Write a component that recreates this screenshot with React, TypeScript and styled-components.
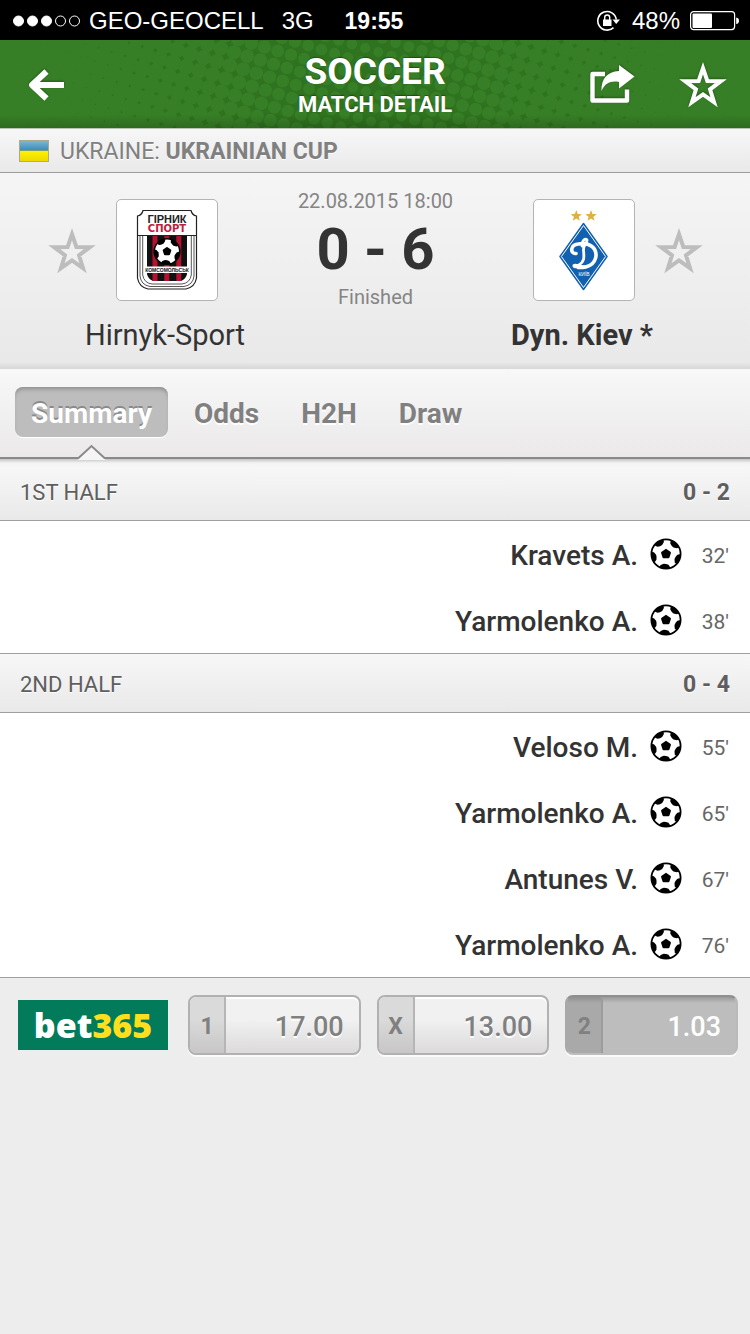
import React from "react";
import styled, { createGlobalStyle } from "styled-components";

const GlobalStyle = createGlobalStyle`
  * { box-sizing: border-box; }
  body {
    margin: 0;
    background: #ededed;
    font-family: Roboto, "Noto Sans", sans-serif;
    color: #333;
  }
  button { font: inherit; color: inherit; border: 0; padding: 0; background: none; cursor: pointer; }
  h1, h2, p, ul { margin: 0; padding: 0; font: inherit; }
  svg { display: block; flex: none; }
`;

const StatusBar = styled.div`
  display: grid;
  grid-template-columns: 1fr auto 1fr;
  align-items: center;
  height: 40px;
  padding: 2px 11px 0 13px;
  background: #000;
  color: #fff;
  font-family: "Liberation Sans", Arial, sans-serif;
  font-size: 24px;
`;

const StatusGroup = styled.div<{ $end?: boolean }>`
  display: flex;
  align-items: center;
  gap: ${(p) => (p.$end ? 10 : 8)}px;
  white-space: nowrap;
  justify-content: ${(p) => (p.$end ? "flex-end" : "flex-start")};
`;

const Network = styled.span`
  margin-left: 10px;
`;

const Clock = styled.time`
  margin-right: 4px;
  font-size: 23px;
  font-weight: 700;
`;

const Header = styled.header`
  position: relative;
  display: grid;
  grid-template-columns: 1fr auto 1fr;
  align-items: center;
  height: 88px;
  padding: 0 23px;
  background: #377f26;
  color: #fff;
  overflow: hidden;
`;

const Halftone = styled.svg`
  position: absolute;
  top: 0;
  left: 50%;
  transform: translateX(-50%);
`;

const HeaderShade = styled.div`
  position: absolute;
  inset: 0;
  background: linear-gradient(transparent 84%, rgba(0, 0, 0, 0.16));
`;

const Titles = styled.div`
  position: relative;
  padding-top: 4px;
  text-align: center;
  font-weight: 700;
  text-shadow: 0 -1px 1px rgba(0, 0, 0, 0.35);
`;

const Title = styled.h1`
  font-size: 37px;
  line-height: 38px;
  font-weight: 700;
`;

const Subtitle = styled.p`
  font-size: 22px;
  line-height: 28px;
`;

const HeaderActions = styled.div<{ $end?: boolean }>`
  position: relative;
  display: flex;
  align-items: center;
  gap: 44px;
  justify-content: ${(p) => (p.$end ? "flex-end" : "flex-start")};
  filter: drop-shadow(0 -1px 1px rgba(0, 0, 0, 0.3));
`;

const League = styled.div`
  display: flex;
  align-items: center;
  gap: 11px;
  height: 45px;
  padding: 0 19px;
  border-top: 1px solid #b9c4b5;
  border-bottom: 1px solid #9c9c9c;
  background: linear-gradient(#f7f7f7, #e9e9e9);
  color: #808080;
  font-size: 23px;
  line-height: 26px;
  text-shadow: 0 1px 0 #fff;
`;

const LeagueName = styled.span`
  padding-top: 2px;
`;

const Flag = styled.span`
  width: 30px;
  height: 22px;
  border: 1px solid #a9ab8a;
  background: linear-gradient(#7db5d3, #3b8dbb 46%, #93a05a 48%, #93a05a 50%, #fff000 52%, #ecd800);
`;

const Match = styled.section`
  display: flex;
  height: 196px;
  padding: 26px 47px 0 48px;
  background: linear-gradient(#f5f5f5, #e9e9e9 97%, #d9d9d9);
  border-bottom: 1px solid #dadada;
`;

const Team = styled.div`
  flex: 0 0 238px;
  display: flex;
  flex-direction: column;
  align-items: center;
  gap: 14px;
`;

const CrestRow = styled.div<{ $away?: boolean }>`
  display: flex;
  flex-direction: ${(p) => (p.$away ? "row-reverse" : "row")};
  align-items: center;
  gap: 20px;
  ${(p) => (p.$away ? "padding-left" : "padding-right")}: 68px;
`;

const Crest = styled.div`
  width: 102px;
  height: 102px;
  border: 1px solid #b4b4b4;
  border-radius: 5px;
  background: #fff;
`;

const TeamName = styled.h2<{ $winner?: boolean }>`
  padding-right: 4px;
  font-size: 29px;
  line-height: 40px;
  font-weight: ${(p) => (p.$winner ? 700 : 400)};
  white-space: nowrap;
`;

const ScoreBox = styled.div`
  flex: 1;
  display: flex;
  flex-direction: column;
  align-items: center;
  margin-top: -10px;
  white-space: nowrap;
  color: #858585;
  font-size: 20px;
  line-height: 24px;
`;

const Score = styled.strong`
  color: #333;
  font-size: 58px;
  line-height: 72px;
  font-weight: 700;
`;

const Tabs = styled.nav`
  position: relative;
  display: flex;
  gap: 10px;
  height: 90px;
  padding: 18px 15px 0;
  border-bottom: 2px solid #8b8989;
  background: linear-gradient(#f8f8f8, #ebe9ea);
`;

const Tab = styled.button<{ $active?: boolean }>`
  height: 50px;
  padding: 2px 16px 0;
  border-radius: 8px;
  font-size: 28px;
  font-weight: 700;
  color: ${(p) => (p.$active ? "#fff" : "#808080")};
  background: ${(p) => (p.$active ? "#bdbdbd" : "none")};
  box-shadow: ${(p) => (p.$active ? "inset 0 4px 4px -2px #8c8c8c, 0 1px 0 #fff" : "none")};
  text-shadow: ${(p) => (p.$active ? "0 -2px 0 #8a8a8a" : "0 2px 0 #fff")};
`;

const Pointer = styled.svg`
  position: absolute;
  left: 77px;
  bottom: -3px;
`;

const PeriodHead = styled.div<{ $underTabs?: boolean }>`
  display: flex;
  justify-content: space-between;
  align-items: center;
  height: ${(p) => (p.$underTabs ? 62 : 60)}px;
  padding: ${(p) => (p.$underTabs ? "5px 20px 0" : "2px 20px 0")};
  border-top: ${(p) => (p.$underTabs ? "none" : "1px solid #9f9f9f")};
  border-bottom: 1px solid #9f9f9f;
  background: ${(p) =>
    p.$underTabs ? "linear-gradient(#c4c4c4, #f3f3f3 4px, #f7f7f7 8px, #e9e9e9)" : "linear-gradient(#f7f7f7, #e9e9e9)"};
  color: #5e5e5e;
  font-size: 22px;
  text-shadow: 0 1px 0 #fff;
`;

const PeriodScore = styled.b`
  font-size: 23px;
`;

const Events = styled.ul`
  list-style: none;
  background: #fff;
`;

const EventRow = styled.li`
  display: flex;
  justify-content: flex-end;
  align-items: center;
  gap: 12px;
  height: 66px;
  padding-right: 21px;
`;

const Player = styled.span`
  padding-top: 3px;
  font-size: 28px;
  line-height: 32px;
  font-weight: 500;
`;

const Minute = styled.span`
  width: 35px;
  padding-top: 4px;
  text-align: right;
  font-size: 21px;
  line-height: 24px;
  color: #666;
`;

const OddsBar = styled.section`
  display: flex;
  align-items: center;
  gap: 20px;
  padding: 17px 12px 17px 18px;
  border-top: 1px solid #9f9f9f;
`;

const BookmakerLink = styled.a`
  flex: none;
  width: 150px;
  height: 50px;
  background: #027b5b;
  color: #fff;
  font: 800 34px/50px "Open Sans", sans-serif;
  text-align: center;
  text-decoration: none;
`;

const Yellow = styled.span`
  color: #ffdf1b;
`;

const OddsList = styled.div`
  flex: 1;
  display: flex;
  gap: 16px;
`;

const Odd = styled.button<{ $picked?: boolean }>`
  flex: 1;
  display: flex;
  height: 60px;
  border: 2px solid #b1b1b1;
  border-radius: 8px;
  overflow: hidden;
  background: ${(p) =>
    p.$picked
      ? "linear-gradient(#999, #bdbdbd 6px)"
      : "linear-gradient(#f1f1f1 40%, #dcdadb)"};
  box-shadow: 0 2px 0 #fbfbfb${(p) => (p.$picked ? "" : ", inset 0 2px 0 #fff")};
  ${(p) => p.$picked && "border-color: #8f8f8f #bababa #bdbdbd #a9a9a9;"}
  color: ${(p) => (p.$picked ? "#fff" : "#808080")};
  text-shadow: ${(p) => (p.$picked ? "none" : "0 2px 0 #fff")};
`;

const OddKey = styled.span<{ $picked?: boolean }>`
  width: 36px;
  border-right: 2px solid ${(p) => (p.$picked ? "#9d9d9d" : "#b5b5b5")};
  background: ${(p) => (p.$picked ? "linear-gradient(#909090, #a9a9a9 6px)" : "linear-gradient(#dadada 40%, #c8c6c7)")};
  color: #808080;
  font-size: 23px;
  font-weight: 700;
  line-height: 60px;
  text-shadow: none;
`;

const OddValue = styled.span`
  flex: 1;
  padding-right: 15px;
  text-align: right;
  font-size: 27px;
  font-weight: 500;
  line-height: 60px;
`;

/* Rotated square lattice whose dots grow away from the middle until they merge. */
const dots: { x: number; y: number; r: number }[] = [];
for (let i = -40; i <= 40; i++) {
  for (let j = -20; j <= 20; j++) {
    const x = 234 + i * 13.2 - j * 4.1;
    const y = 12.3 + i * 3.9 + j * 13.1;
    if (x > 10 && x < 740 && y > -12 && y < 100) {
      dots.push({ x, y, r: 5 + Math.abs(x - 372) * 0.0155 });
    }
  }
}

const HalftonePattern = () => (
  <Halftone width="750" height="88" viewBox="0 0 750 88" aria-hidden="true">
    <rect x="60" width="636" height="88" fill="#2f721f" />
    {dots.map((d, i) => (
      <circle key={i} cx={d.x} cy={d.y} r={d.r} fill="#377f26" />
    ))}
  </Halftone>
);

const polar = (cx: number, cy: number, r: number, deg: number) => {
  const a = (deg * Math.PI) / 180;
  return `${(cx + r * Math.cos(a)).toFixed(2)},${(cy + r * Math.sin(a)).toFixed(2)}`;
};

const starPoints = (cx: number, cy: number, outer: number, inner: number) =>
  Array.from({ length: 10 }, (_, i) => polar(cx, cy, i % 2 ? inner : outer, -90 + i * 36)).join(" ");

const StarIcon = ({ color }: { color: string }) => (
  <svg width="48" height="48" viewBox="0 0 48 48" aria-hidden="true">
    <polygon points={starPoints(24, 27, 18.8, 7.4)} fill="none" stroke={color} strokeWidth="4" strokeMiterlimit="10" />
  </svg>
);

const BallShape = ({ x, y, r }: { x: number; y: number; r: number }) => (
  <g transform={`translate(${x} ${y}) scale(${r / 16})`}>
    <circle r="14.6" fill="#fff" stroke="#000" strokeWidth="1.8" />
    <polygon
      points={[0, 1, 2, 3, 4].map((k) => polar(0, 0, 3.9, -90 + k * 72)).join(" ")}
      stroke="#000"
      strokeWidth="2.4"
      strokeLinejoin="round"
    />
    {[95, 23, -49, -121, 167].map((a) => (
      <path
        key={a}
        transform={`rotate(${a})`}
        d="M10.6 -3.4 Q9.6 -1 9.8 1.4 L11.4 4.400 Q12.600 5.400 14 5 L15 0 L14 -5.400 Q12 -5.200 10.600 -3.400Z"
      />
    ))}
  </g>
);

const BallIcon = () => (
  <svg width="32" height="32" viewBox="0 0 32 32" role="img" aria-label="Goal">
    <BallShape x={16} y={16} r={16} />
  </svg>
);

const BackIcon = () => (
  <svg width="44" height="40" viewBox="0 0 44 40" aria-hidden="true">
    <path d="M9 21H41M23.500 7.500L9 21L23.500 34.500" fill="none" stroke="#fff" strokeWidth="6" strokeLinejoin="round" />
  </svg>
);

const ShareIcon = () => (
  <svg width="46" height="38" viewBox="0 0 46 38" aria-hidden="true">
    <path d="M16 9H3.5V35.5H38V24.5" fill="none" stroke="#fff" strokeWidth="4.4" strokeLinejoin="round" />
    <path d="M30 0L45.500 11.500L30 23.500V17C22 15.500 16 18 12.500 26C12 14 18 6.500 30 6Z" fill="#fff" />
  </svg>
);

const SignalDots = () => (
  <svg width="68" height="12" viewBox="0 0 68 12" role="img" aria-label="Signal">
    {[0, 1, 2, 3, 4].map((i) => (
      <circle key={i} cx={5.5 + i * 14} cy="6" r="5" fill={i < 3 ? "#fff" : "none"} stroke="#fff" strokeWidth="1" />
    ))}
  </svg>
);

const LockIcon = () => (
  <svg width="26" height="22" viewBox="0 0 26 22" role="img" aria-label="Rotation lock">
    <path d="M20.300 9.500A9.300 9.300 0 1 0 17.500 17.600" fill="none" stroke="#fff" strokeWidth="1.600" />
    <path d="M16.500 9.500H24L20.200 14Z" fill="#fff" />
    <rect x="7" y="9.500" width="8.500" height="6.500" fill="#fff" />
    <path d="M8.700 10V7.500A2.500 2.500 0 0 1 13.700 7.500V10" fill="none" stroke="#fff" strokeWidth="1.400" />
  </svg>
);

const BatteryIcon = () => (
  <svg width="49" height="20" viewBox="0 0 49 20" role="img" aria-label="Battery">
    <rect x="0.600" y="0.600" width="44" height="18" rx="3" fill="none" stroke="#fff" strokeWidth="1.200" />
    <rect x="2.500" y="2.500" width="19.500" height="14.500" rx="1" fill="#fff" />
    <path d="M46.200 6.500Q49 7 49 9.700Q49 12.500 46.200 13Z" fill="#fff" />
  </svg>
);

const HirnykCrest = () => (
  <svg width="100" height="100" viewBox="1 1 100 100" role="img" aria-label="Hirnyk-Sport crest">
    <path
      d="M27 11.500H75Q76 16 80.500 17V79Q79 88 70 90H32Q23 88 21.500 79V17Q26 16 27 11.500Z"
      fill="#fff"
      stroke="#222"
      strokeWidth="1.200"
    />
    <path d="M21 36.500H81" stroke="#222" strokeWidth="1" />
    <path d="M24 37V77Q25 86 34 87.500H68Q77 86 78 77V37M26.700 37V76Q28 84 36 85H66Q74 84 75.300 76V37" fill="none" stroke="#555" strokeWidth="1" />
    <path d="M31 37H71V75Q70 80 65 82H37Q32 80 31 75Z" fill="#111" />
    <path d="M36.500 37h5v45h-5zM48.300 37h5v45h-5zM60.300 37h5v45h-5z" fill="#b5122f" />
    <BallShape x={51} y={52.500} r={14} />
    <rect x="30" y="67.500" width="42" height="6.500" fill="#fff" />
    <text x="51" y="72.700" textAnchor="middle" fontFamily="Liberation Sans" fontWeight="700" fontSize="5" fill="#111">
      КОМСОМОЛЬСЬК
    </text>
    <text x="51" y="23.500" textAnchor="middle" fontFamily="Liberation Sans" fontWeight="700" fontSize="11" fill="#222">
      ГІРНИК
    </text>
    <text x="51" y="33" textAnchor="middle" fontFamily="DejaVu Sans" fontWeight="700" fontSize="10" fill="#c0203c">
      СПОРТ
    </text>
  </svg>
);

const DynamoCrest = () => (
  <svg width="100" height="100" viewBox="1 1 100 100" role="img" aria-label="Dynamo Kyiv crest">
    <polygon points={starPoints(43.300, 17, 6, 2.500)} fill="#deb13c" />
    <polygon points={starPoints(58, 17, 6, 2.500)} fill="#deb13c" />
    <path d="M50.500 24.500L74 57.500L50.500 90.500L27 57.500Z" fill="#1261b0" stroke="#1261b0" strokeWidth="1.500" strokeLinejoin="round" />
    <path d="M50.500 26.500L72.600 57.500L50.500 88.500L28.400 57.500Z" fill="none" stroke="#fff" strokeWidth="1" />
    <path
      d="M43 54.500C37 55 37 46 45 45C57 43 63.500 49 63 57C62 65 55 69 45 68.500"
      fill="none"
      stroke="#fff"
      strokeWidth="3.600"
      strokeLinecap="round"
    />
    <path
      d="M49 47C49 41 53 38.500 54 41C54.500 44 50 46 50.500 51C51 58 52 62 46 66C43 69 40.500 68 41 66.500C42 64.500 47 68 52 68"
      fill="none"
      stroke="#fff"
      strokeWidth="2.800"
      strokeLinecap="round"
    />
    <text x="51" y="77" textAnchor="middle" fontFamily="Liberation Sans" fontSize="5" fill="#fff">
      КИЇВ
    </text>
  </svg>
);

type Goal = { player: string; minute: string };

const periods: { name: string; score: string; goals: Goal[] }[] = [
  {
    name: "1ST HALF",
    score: "0 - 2",
    goals: [
      { player: "Kravets A.", minute: "32'" },
      { player: "Yarmolenko A.", minute: "38'" },
    ],
  },
  {
    name: "2ND HALF",
    score: "0 - 4",
    goals: [
      { player: "Veloso M.", minute: "55'" },
      { player: "Yarmolenko A.", minute: "65'" },
      { player: "Antunes V.", minute: "67'" },
      { player: "Yarmolenko A.", minute: "76'" },
    ],
  },
];

const odds = [
  { key: "1", value: "17.00" },
  { key: "X", value: "13.00" },
  { key: "2", value: "1.03", picked: true },
];

export default function App() {
  return (
    <>
      <GlobalStyle />
      <StatusBar>
        <StatusGroup>
          <SignalDots />
          <span>GEO-GEOCELL</span>
          <Network>3G</Network>
        </StatusGroup>
        <Clock>19:55</Clock>
        <StatusGroup $end>
          <LockIcon />
          <span>48%</span>
          <BatteryIcon />
        </StatusGroup>
      </StatusBar>

      <Header>
        <HalftonePattern />
        <HeaderShade />
        <HeaderActions>
          <button aria-label="Back">
            <BackIcon />
          </button>
        </HeaderActions>
        <Titles>
          <Title>SOCCER</Title>
          <Subtitle>MATCH DETAIL</Subtitle>
        </Titles>
        <HeaderActions $end>
          <button aria-label="Share">
            <ShareIcon />
          </button>
          <button aria-label="Add to favourites">
            <StarIcon color="#fff" />
          </button>
        </HeaderActions>
      </Header>

      <League>
        <Flag />
        <LeagueName>
          UKRAINE: <b>UKRAINIAN CUP</b>
        </LeagueName>
      </League>

      <Match>
        <Team>
          <CrestRow>
            <button aria-label="Follow Hirnyk-Sport">
              <StarIcon color="#bdbdbd" />
            </button>
            <Crest>
              <HirnykCrest />
            </Crest>
          </CrestRow>
          <TeamName>Hirnyk-Sport</TeamName>
        </Team>
        <ScoreBox>
          <span>22.08.2015 18:00</span>
          <Score>0 - 6</Score>
          <span>Finished</span>
        </ScoreBox>
        <Team>
          <CrestRow $away>
            <button aria-label="Follow Dyn. Kiev">
              <StarIcon color="#bdbdbd" />
            </button>
            <Crest>
              <DynamoCrest />
            </Crest>
          </CrestRow>
          <TeamName $winner>Dyn. Kiev *</TeamName>
        </Team>
      </Match>

      <Tabs>
        <Tab $active>Summary</Tab>
        <Tab>Odds</Tab>
        <Tab>H2H</Tab>
        <Tab>Draw</Tab>
        <Pointer width="30" height="16" viewBox="0 0 30 16" aria-hidden="true">
          <path d="M1 16V14L14.500 1.500L28 14V16Z" fill="#f5f5f5" />
          <path d="M0 14H1.500L14.500 2L27.500 14H30" fill="none" stroke="#8b8989" strokeWidth="2" />
        </Pointer>
      </Tabs>

      {periods.map((p, i) => (
        <section key={p.name}>
          <PeriodHead $underTabs={i === 0}>
            <span>{p.name}</span>
            <PeriodScore>{p.score}</PeriodScore>
          </PeriodHead>
          <Events>
            {p.goals.map((g) => (
              <EventRow key={g.minute}>
                <Player>{g.player}</Player>
                <BallIcon />
                <Minute>{g.minute}</Minute>
              </EventRow>
            ))}
          </Events>
        </section>
      ))}

      <OddsBar>
        <BookmakerLink href="#bet365">
          bet<Yellow>365</Yellow>
        </BookmakerLink>
        <OddsList>
          {odds.map((o) => (
            <Odd key={o.key} $picked={o.picked}>
              <OddKey $picked={o.picked}>{o.key}</OddKey>
              <OddValue>{o.value}</OddValue>
            </Odd>
          ))}
        </OddsList>
      </OddsBar>
    </>
  );
}
